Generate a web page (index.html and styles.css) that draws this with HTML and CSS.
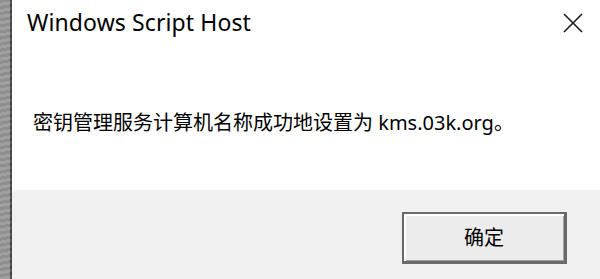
FILE: index.html
```html
<!DOCTYPE html>
<html lang="zh-CN">
<head>
<meta charset="utf-8">
<title>Windows Script Host</title>
<link rel="stylesheet" href="styles.css">
</head>
<body>
<div class="screen">
  <div class="desktop-edge"></div>
  <div class="dialog">
    <div class="titlebar">
      <span class="title">Windows Script Host</span>
      <button class="close" aria-label="关闭">
        <svg width="20" height="20" viewBox="0 0 20 20"><path d="M1 1 L19 19 M19 1 L1 19" stroke="#1a1a1a" stroke-width="1.6" fill="none"/></svg>
      </button>
    </div>
    <div class="content">
      <p class="message">密钥管理服务计算机名称成功地设置为 kms.03k.org。</p>
    </div>
    <div class="footer">
      <button class="ok">确定</button>
    </div>
  </div>
</div>
</body>
</html>
```

FILE: styles.css
```css
* { box-sizing: border-box; }
html, body { margin: 0; padding: 0; background: #fff; }
.screen {
  width: 600px;
  height: 279px;
  display: flex;
  overflow: hidden;
  font-family: "Noto Sans", "Noto Sans CJK SC", sans-serif;
}
.desktop-edge {
  width: 12px;
  flex: none;
  background:
    repeating-linear-gradient(170deg, rgba(0,0,0,0.08) 0 3px, rgba(255,255,255,0.06) 3px 6px),
    linear-gradient(90deg, #9a9a9a 0 10px, #4a4a4a 10px 12px);
}
.dialog {
  flex: 1;
  display: flex;
  flex-direction: column;
  background: #fff;
}
.titlebar {
  height: 48px;
  display: flex;
  align-items: flex-start;
  justify-content: space-between;
  padding: 6px 17px 0 15px;
}
.title {
  font-size: 23px;
  color: #000;
  letter-spacing: 0.1px;
}
.close {
  border: none;
  background: transparent;
  padding: 0;
  margin-top: 7px;
  width: 20px;
  height: 20px;
}
.content {
  height: 142px;
  padding: 59px 0 0 21px;
}
.message {
  margin: 0;
  font-size: 20px;
  color: #000;
  font-family: "Noto Sans", "Noto Sans CJK SC", sans-serif;
}
.footer {
  flex: 1;
  background: #f0f0f0;
  display: flex;
  justify-content: flex-end;
  align-items: flex-start;
  padding: 22px 33px 0 0;
}
.ok {
  width: 165px;
  height: 52px;
  font-family: "Noto Sans CJK SC", sans-serif;
  font-size: 20px;
  color: #000;
  background: #ececec;
  border: 2px solid #6a6a6a;
  border-right-width: 3px;
  border-bottom-width: 3px;
  box-shadow: inset 2px 2px 0 #ffffff, inset -1px -1px 0 #a0a0a0;
  padding: 0 0 2px 0;
}
```
